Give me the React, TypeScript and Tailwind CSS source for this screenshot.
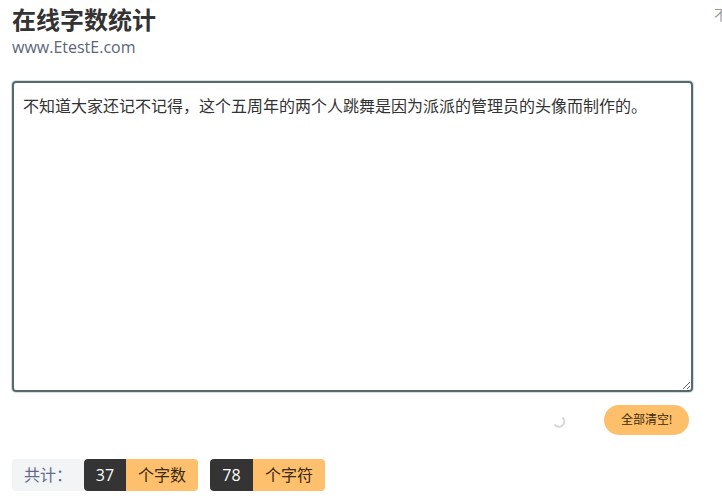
import { useState } from 'react';

const FONT = { fontFamily: '"Open Sans", "Noto Sans CJK SC", sans-serif' };

export default function App() {
  const [text, setText] = useState(
    '不知道大家还记不记得，这个五周年的两个人跳舞是因为派派的管理员的头像而制作的。'
  );

  return (
    <div className="relative w-[722px] h-[499px] overflow-hidden bg-white text-[#333]" style={FONT}>
      <span className="absolute left-[714px] top-[4px] text-[14px] text-[#999]">不</span>

      <div className="pl-[12px] w-[693px]">
        <header className="pt-[4px]">
          <h1 className="text-[24px] leading-[32px] font-bold text-[#333]">在线字数统计</h1>
          <p className="text-[16px] leading-[22px] text-[#5a6679]">www.EtestE.com</p>
        </header>

        <textarea
          value={text}
          onChange={(e) => setText(e.target.value)}
          className="mt-[23px] block w-[681px] h-[311px] rounded-[4px] border-2 border-[#566a6e] px-[9px] py-[12px] text-[16px] leading-[22px] text-[#333] shadow-[0_0_0_1px_#d5dfe0] outline-none resize-y"
          style={FONT}
        />

        <div className="flex items-center justify-end mt-[13px] h-[30px] pr-[4px]">
          <svg width="14" height="14" viewBox="0 0 14 14" className="mr-[38px] mt-[2px]">
            <path d="M11 4 A5 5 0 0 1 3 11" fill="none" stroke="#d8d8d8" strokeWidth="2" strokeLinecap="round" />
          </svg>
          <button
            type="button"
            onClick={() => setText('')}
            className="h-[30px] w-[85px] rounded-full bg-[#fdbf6a] text-[12px] text-[#3a2a10]"
          >
            全部清空!
          </button>
        </div>

        <div className="flex items-center mt-[24px] text-[16px]">
          <div className="flex h-[32px] rounded-[4px] overflow-hidden">
            <span className="flex items-center w-[72px] bg-[#f3f4f6] text-[#5f6b88] pl-[12px]">共计：</span>
            <span className="flex items-center justify-center w-[42px] bg-[#343434] text-white rounded-l-[4px]">37</span>
            <span className="flex items-center justify-center w-[72px] bg-[#fec06c] text-[#3a2a10]">个字数</span>
          </div>
          <div className="flex h-[32px] rounded-[4px] overflow-hidden ml-[12px]">
            <span className="flex items-center justify-center w-[43px] bg-[#343434] text-white">78</span>
            <span className="flex items-center justify-center w-[72px] bg-[#fec06c] text-[#3a2a10]">个字符</span>
          </div>
        </div>
      </div>
    </div>
  );
}
